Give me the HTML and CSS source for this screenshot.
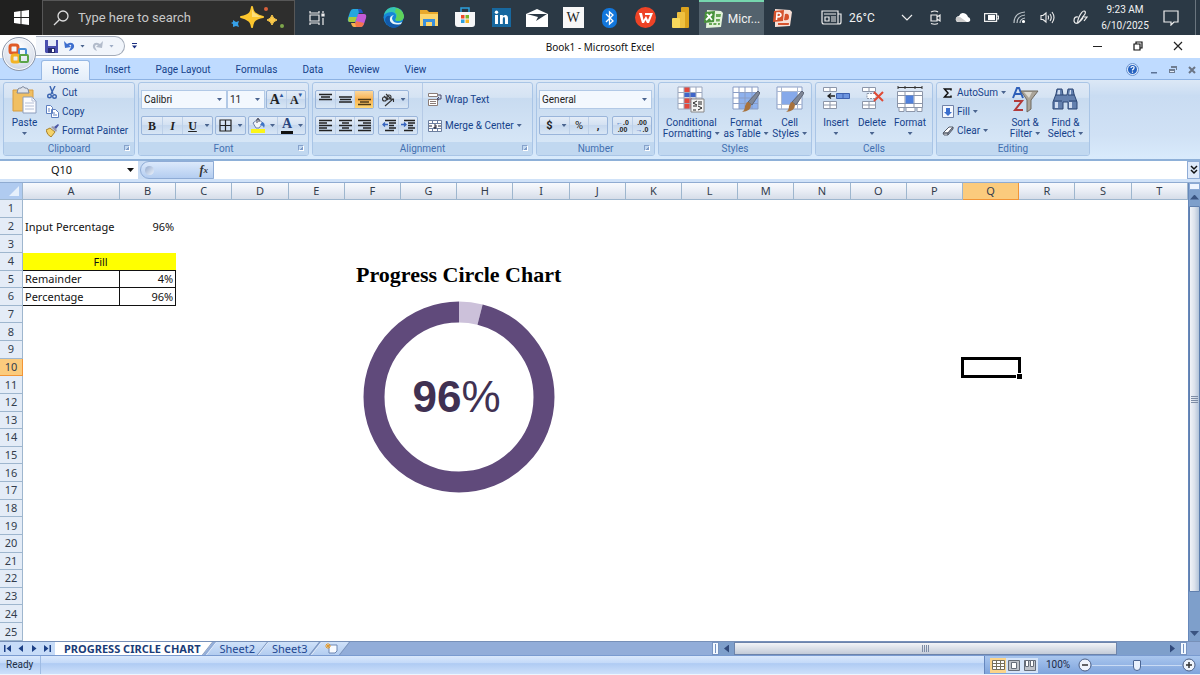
FILE: index.html
```html
<!DOCTYPE html>
<html lang="en">
<head>
<meta charset="utf-8">
<title>Book1 - Microsoft Excel</title>
<link rel="stylesheet" href="styles.css">
</head>
<body>
<header class="taskbar">
  <button class="start" aria-label="Start"><svg width="15" height="15" viewBox="0 0 15 15" fill="#fff"><path d="M0 2 6.500 1v6H0zM7.500 .9 15 0v7H7.500zM0 8h6.500v6L0 13zM7.500 8H15v7l-7.500-1z"/></svg></button>
  <div class="search">
    <svg width="16" height="16" viewBox="0 0 16 16" fill="none" stroke="#ddd" stroke-width="1.300"><circle cx="10" cy="6" r="5"/><path d="M6.300 9.700 1 15"/></svg>
    <input type="text" aria-label="Search" placeholder="Type here to search">
    <svg width="56" height="24" viewBox="0 0 56 24"><path d="M22 1q1 6 4 7 2 2 7 3-6 1-8 3-2 1-3 7-1-6-4-7-2-2-7-3 6-1 8-3 2-1 3-7z" fill="#fcc62e" stroke="#fcc62e" stroke-width="2" stroke-linejoin="round"/><path d="M22 2q1 5 4 6 2 2 6 3H22z" fill="#fee07a"/><path d="M42 9q1 4 5 5-4 1-5 5-1-4-5-5 4-1 5-5z" fill="#fbc94a" stroke="#fbc94a"/><path d="m3 14 3 2 3-1-1 3 1 3-3-1-3 1v-3l-2-1 2-1z" fill="#36a0e8"/><circle cx="36" cy="3" r="2" fill="#d9603a"/><circle cx="52" cy="20" r="2" fill="#7ea64b"/></svg>
  </div>
  <nav class="apps" aria-label="Taskbar">
    <button class="task-view" aria-label="Task view"><svg width="16" height="16" viewBox="0 0 16 16" fill="none" stroke="#eee" stroke-width="1.200"><path d="M1 1v2h9V1M1 15v-2h9v2M1 5h9v6H1zM14 1v2m0 5v7"/><path d="M13 4h2v2h-2z" fill="#eee"/></svg></button>
    <button aria-label="Copilot"><svg width="20" height="20" viewBox="0 0 20 20"><path d="M6 1h7l-4 13H3Q0 14 1 10L3 4Q4 1 6 1z" fill="#25a7de"/><path d="M2 9h8l-2 5H3Q0 14 2 9z" fill="#a8ca3c"/><path d="M11 1h2q2 0 3 4h-4z" fill="#2356c4"/><path d="M14 19H7l4-13h6q3 0 2 4l-2 6q-1 3-3 3z" fill="#c45bd7"/><path d="m9 13-2 6h7q2 0 3-4z" fill="#f4764d"/><path d="M9 19H7q-2 0-3-4h4z" fill="#f6b04b"/></svg></button>
    <button aria-label="Edge"><svg width="21" height="21" viewBox="0 0 21 21"><circle cx="10.500" cy="10.500" r="10" fill="#1685d8"/><path d="M1 8Q3 0 11 0q9 1 10 9 0 5-6 5-4 0-2-3Q14 6 9 5 4 5 1 8z" fill="#35c5b5"/><path d="M13 1q7 2 8 8 0 5-6 5-4 0-2-3 2-4-1-6z" fill="#5fd25a"/><path d="M7 9q-2 9 11 8-3 4-8 4-7-2-8-8 1-5 5-4z" fill="#1259a8"/><path d="M11 8q-4 3 0 7 4 2 8 0l-1 2q-8 2-11-3-1-5 4-6z" fill="#e9f6fb"/></svg></button>
    <button aria-label="File Explorer"><svg width="20" height="18" viewBox="0 0 20 18"><path d="M1 1h7l2 2h9v14H1z" fill="#e9a92c"/><path d="M1 5h18v12H1z" fill="#fcd56c"/><path d="M4 10h12v7h-3v-4H7v4H4z" fill="#3a8fdc"/></svg></button>
    <button aria-label="Store"><svg width="20" height="21" viewBox="0 0 20 21"><path d="M6 5V1h8v4" fill="none" stroke="#2da0dc" stroke-width="1.500"/><path d="M0 5h20v12q0 3-3 3H3q-3 0-3-3z" fill="#f5f6f7"/><path d="M6 8h3.500v3.500H6z" fill="#ee4b2b"/><path d="M10.500 8H14v3.500h-3.500z" fill="#78b829"/><path d="M6 12.500h3.500V16H6z" fill="#2b9fe0"/><path d="M10.500 12.500H14V16h-3.500z" fill="#f8b420"/></svg></button>
    <button aria-label="LinkedIn"><svg width="19" height="19" viewBox="0 0 19 19"><path d="M0 0h19v19H0z" fill="#17689f"/><path d="M3 7h3v9H3zM8 7h2.800v1.300Q12 7 13.500 7 16 7 16 10.500V16h-3v-5q0-2-1-2-1.200 0-1.200 2v5H8z" fill="#fff"/><circle cx="4.500" cy="4.200" r="1.700" fill="#fff"/></svg></button>
    <button aria-label="Mail"><svg width="22" height="18" viewBox="0 0 22 18"><path d="M0 5 11 0l11 5v13H0z" fill="#fff"/><path d="M1 5h20L10 12l2-4z" fill="#2b3945"/></svg></button>
    <button aria-label="Wikipedia"><span class="wiki">W</span></button>
    <button aria-label="Bluetooth"><svg width="15" height="20" viewBox="0 0 15 20"><rect width="15" height="20" rx="7" fill="#1277dc"/><path d="m4 6 7 7-3.500 3V4L11 7l-7 7" fill="none" stroke="#fff" stroke-width="1.300"/></svg></button>
    <button aria-label="WPS Office"><svg width="21" height="21" viewBox="0 0 21 21"><circle cx="10.500" cy="10.500" r="10.500" fill="#ee4326"/><path d="M4 6h3l1.500 7L11 9l2 4 2-5h-5V6h8l-4 10h-2l-1.500-3L9 16H7z" fill="#fff"/></svg></button>
    <button aria-label="Power BI"><svg width="18" height="22" viewBox="0 0 18 22"><rect x="9" width="8" height="21" rx="1" fill="#dba21c"/><rect x="5" y="5" width="8" height="16" rx="1" fill="#efc140"/><rect y="11" width="8" height="10" rx="1" fill="#f8d95c"/></svg></button>
    <button class="running"><svg width="21" height="20" viewBox="0 0 21 20"><path d="m4 1 14 1 2 2-2 14-15 1z" fill="#e3f3db"/><path d="M13 5h5l-.5 3H13zM6 14h3v2H6zm4.500 0h3l-.2 2h-3zm4.500 0h2l-.3 2H15zM13 10h4l-.3 2.500H13z" fill="#67a854"/><path d="m2 3 10-1-1 11-10 1z" fill="#49933d"/><path d="m4 5 5 6m0-6-6 6" stroke="#fff" stroke-width="1.800"/></svg><span>Micr...</span></button>
    <button aria-label="PowerPoint"><svg width="21" height="20" viewBox="0 0 21 20"><path d="m3 1 15 1 2 2-2 14-15 1z" fill="#f8dfd5"/><path d="M6 15h11l-.3 2H6z" fill="#d6532d"/><path d="M13 6q4-1 4 3t-5 3z" fill="#d6512c"/><path d="m2 3 10-1-1 11-10 1z" fill="#d6532d"/><path d="m4.500 12 .5-7h2.500q2 1 1.500 2.500Q8 9 5 9" fill="none" stroke="#fff" stroke-width="1.500"/></svg></button>
  </nav>
  <div class="tray">
    <button class="weather"><svg width="21" height="15" viewBox="0 0 21 15" fill="none" stroke="#eee" stroke-width="1.200"><path d="M1 1h16v13H3q-2 0-2-2zM17 4h3v8q0 2-2 2h-2M3 4h12M4 7h4v4H4zM10 7h5m-5 2h5m-5 2h5"/></svg><span>26°C</span></button>
    <button aria-label="Show hidden icons"><svg width="12" height="7" viewBox="0 0 12 7" fill="none" stroke="#eee" stroke-width="1.200"><path d="m1 1 5 5 5-5"/></svg></button>
    <button aria-label="Meet now"><svg width="13" height="15" viewBox="0 0 13 15" fill="none" stroke="#eee" stroke-width="1.200"><path d="M2 5h6v6H2zM8 7l3-2v6L8 9M2 2q4-2 7 0M2 13.500q4 1.500 7 0"/></svg></button>
    <button aria-label="OneDrive"><svg width="16" height="11" viewBox="0 0 16 11"><path d="M4 10Q0 10 1 6q1-2 3-2 2-5 7-2 2 2 2 3 3 1 2 4-1 1-2 1z" fill="#fff"/><path d="M1 6q1-2 4-1l7 5H4Q0 10 1 6z" fill="#ccc"/></svg></button>
    <button aria-label="Battery"><svg width="15" height="9" viewBox="0 0 15 9"><path d="M.6.600h12v7.800h-12zM13 3h1.500v3H13" fill="none" stroke="#eee" stroke-width="1.200"/><path d="M4 2h7v5H4z" fill="#fff"/></svg></button>
    <button aria-label="Wi-Fi"><svg width="13" height="13" viewBox="0 0 13 13" fill="none" stroke="#bbc3c8" stroke-width="1.200"><path d="M1 12Q1 2 12 1M4 12q0-7 8-8M7 12q0-4 5-5"/><circle cx="10.500" cy="10.500" r="1" stroke="#fff" fill="#fff"/></svg></button>
    <button aria-label="Volume"><svg width="15" height="13" viewBox="0 0 15 13" fill="none" stroke="#eee" stroke-width="1.100"><path d="M1 4.500h2L6 2v9L3 8.500H1zM8 4.500q1 2 0 4M10 3q2.500 3.500 0 7M12 1q4 5.500 0 11"/></svg></button>
    <button class="pen" aria-label="Windows Ink"><svg width="15" height="15" viewBox="0 0 15 15" fill="none" stroke="#eee" stroke-width="1.200"><path d="M5 7q-4-1-4 4 1 4 5 1l6-8q1-3-1-3-2 0-5 6-2 5-1 6 3-2 5-5M9 7h5l-3 4"/></svg></button>
    <div class="clock"><time>9:23 AM</time><time>6/10/2025</time></div>
    <button class="notify" aria-label="Notifications"><svg width="16" height="16" viewBox="0 0 16 16" fill="none" stroke="#eee" stroke-width="1.200"><path d="M1 1h14v11h-4l-3 3v-3H1z"/></svg></button>
    <span class="peek"></span>
  </div>
</header>

<div class="titlebar">
  <button class="office" aria-label="Office"><svg width="22" height="22" viewBox="0 0 22 22" fill="none" stroke-width="3"><rect x="2" y="2" width="8" height="8" rx="2" stroke="#e05a26"/><rect x="11" y="6" width="7" height="6" rx="1" stroke="#4a8ed6" stroke-width="2"/><rect x="4" y="12" width="7" height="7" rx="2" stroke="#f3b325"/><rect x="12" y="12" width="8" height="7" rx="1" stroke="#5ba446" stroke-width="2"/></svg></button>
  <div class="qat">
    <button aria-label="Save"><svg width="13" height="13" viewBox="0 0 13 13"><path d="M0 0h13v13H1l-1-1z" fill="#4a4fae"/><path d="M3 0h8v6H3z" fill="#e6ebf8"/><path d="M3 8h7v5H3z" fill="#252a6c"/><path d="M7 9h2v3H7z" fill="#fff"/></svg></button>
    <button aria-label="Undo"><svg width="12" height="12" viewBox="0 0 12 12"><path d="m1 1 1 7 6-1-2-2q3-1 2 2l-2 4q6-2 5-6Q9 1 4 4z" fill="#3f6fce"/></svg></button><i class="arrow"></i>
    <button aria-label="Redo"><svg width="12" height="12" viewBox="0 0 12 12"><path d="m11 1-1 7-6-1 2-2Q3 4 3 7l2 4Q0 9 1 5q2-4 7-1z" fill="#b3bccb"/></svg></button><i class="arrow faded"></i>
  </div>
  <button class="qat-more" aria-label="Customize toolbar"><svg width="5" height="6" viewBox="0 0 5 6" fill="#1b2f80"><path d="M0 0h5v1H0zM0 2.500h5L2.500 5.500z"/></svg></button>
  <h1>Book1 - Microsoft Excel</h1>
  <div class="window-controls">
    <button aria-label="Minimize"><svg width="10" height="10" viewBox="0 0 10 10" stroke="#222"><path d="M0 5.500h9"/></svg></button>
    <button aria-label="Restore"><svg width="10" height="10" viewBox="0 0 10 10" fill="none" stroke="#111" stroke-width="1.200"><path d="M1 3h6v6H1zM3 3V1h6v6H7"/></svg></button>
    <button aria-label="Close"><svg width="10" height="10" viewBox="0 0 10 10" stroke="#222" stroke-width="1.200"><path d="m1 1 8 8m0-8L1 9"/></svg></button>
  </div>
</div>

<nav class="tabs" aria-label="Ribbon">
  <button class="active">Home</button><button>Insert</button><button>Page Layout</button><button>Formulas</button><button>Data</button><button>Review</button><button>View</button>
  <div class="doc-controls">
    <button aria-label="Help"><svg width="13" height="13" viewBox="0 0 13 13"><circle cx="6.500" cy="6.500" r="6" fill="#dce9fb" stroke="#6c94cf"/><circle cx="6.500" cy="6.500" r="4.500" fill="#2562c0"/><path d="M5 5q0-1.500 1.700-1.500T8 5q0 .8-1.500 1.800v.7M6.500 8.500v1.200" fill="none" stroke="#fff" stroke-width="1.200"/></svg></button>
    <button aria-label="Minimize workbook"><svg width="8" height="8" viewBox="0 0 8 8"><path d="M1 6h6v1.500H1z" fill="#5c7396"/></svg></button>
    <button aria-label="Restore workbook"><svg width="8" height="8" viewBox="0 0 8 8"><path d="M2 0h6v4H7V2H2zM0 3h6v4H0z" fill="#707d91"/><path d="M1 5h4v1H1z" fill="#e5eefb"/></svg></button>
    <button aria-label="Close workbook"><svg width="8" height="8" viewBox="0 0 8 8" stroke="#6b7585" stroke-width="2"><path d="m1 1 6 6m0-6L1 7"/></svg></button>
  </div>
</nav>

<main class="ribbon">
  <section class="group clipboard">
    <div class="tools">
      <button class="big"><svg width="26" height="28" viewBox="0 0 26 28"><path d="M1 4h20v21H1z" fill="#f0bf62" stroke="#d79d40"/><path d="M6 3q1-1 3-1 2-3 4 0 2 0 3 1l1 4H5z" fill="#dfe3ea" stroke="#7c869a"/><path d="M11 11h9l4 4v12H11z" fill="#fbfcff" stroke="#8d9ebd"/><path d="M20 11v4h4M13 17h9m-9 3h9m-9 3h9" fill="none" stroke="#b5c0d6"/></svg><span>Paste</span><i class="arrow"></i></button>
      <div class="stack">
        <button class="small"><svg width="13" height="13" viewBox="0 0 13 13" fill="none" stroke="#3a64b0" stroke-width="1.400"><path d="m4 0 3 8m2-8L5 8"/><circle cx="3.500" cy="10" r="1.800"/><circle cx="8.500" cy="10.500" r="1.800"/></svg>Cut</button>
        <button class="small"><svg width="13" height="13" viewBox="0 0 13 13" fill="#fff" stroke="#5d7fc0"><path d="M.5.500h4l2 2v6h-6zM5.500 4.500h4l3 3v5h-7z"/><path d="M7 8h2m-2 2h4M2 4h2M2 6h2"/></svg>Copy</button>
        <button class="small"><svg width="13" height="13" viewBox="0 0 13 13"><path d="m0 6 4-2 5 4-4 5q-4-2-5-7z" fill="#f4d36a" stroke="#a8802a"/><path d="m5 3 2-1 4 4-1 2z" fill="#9a9aae"/><path d="m8 3 4-3 1 1-3 4z" fill="#4a57a5"/></svg>Format Painter</button>
      </div>
    </div>
    <h2>Clipboard</h2><button class="launch" aria-label="Clipboard options"></button>
  </section>

  <section class="group font">
    <div class="tools rows">
      <div class="row">
        <label class="combo family"><select aria-label="Font"><option>Calibri</option></select><i class="arrow"></i></label><label class="combo size"><select aria-label="Font size"><option>11</option></select><i class="arrow"></i></label>
        <div class="cluster apart"><button class="glyph grow" aria-label="Grow font">A<sup>▴</sup></button><button class="glyph shrink" aria-label="Shrink font">A<sup>▾</sup></button></div>
      </div>
      <div class="row spread">
        <div class="cluster"><button class="glyph"><b>B</b></button><button class="glyph"><i>I</i></button><button class="glyph"><u>U</u></button><button class="drop" aria-label="Underline styles"><i class="arrow"></i></button></div>
        <div class="cluster"><button aria-label="Borders"><svg width="13" height="13" viewBox="0 0 13 13" fill="none" stroke="#222" stroke-width="1.200"><path d="M1 1h11v11H1zM6.500 1v11M1 6.500h11"/></svg></button><button class="drop" aria-label="Border styles"><i class="arrow"></i></button></div>
        <div class="cluster"><button aria-label="Fill color"><svg width="15" height="15" viewBox="0 0 15 15"><path d="m2 5 5-4 5 4-4 5H5z" fill="#f3f6fb" stroke="#6b7fa8"/><path d="M6 5V1q1-1 2 0v3" fill="none" stroke="#445"/><path d="M11 4q4 1 2 6-1-3-4-3z" fill="#3e74c8"/><path d="M0 11h14v4H0z" fill="#fbf518"/></svg></button><button class="drop" aria-label="Fill colors"><i class="arrow"></i></button><button class="glyph ink" aria-label="Font color">A</button><button class="drop" aria-label="Font colors"><i class="arrow"></i></button></div>
      </div>
    </div>
    <h2>Font</h2><button class="launch" aria-label="Font options"></button>
  </section>

  <section class="group alignment">
    <div class="tools">
      <div class="rows">
        <div class="row wide">
          <div class="cluster"><button aria-label="Top align"><svg width="13" height="13" viewBox="0 0 13 13" stroke="#222" stroke-width="1.300"><path d="M0 1.500h13M2 4h9M0 6.500h13"/></svg></button><button aria-label="Middle align"><svg width="13" height="13" viewBox="0 0 13 13" stroke="#222" stroke-width="1.300"><path d="M0 4h13M1 6.500h11M0 9h13"/></svg></button><button class="on" aria-label="Bottom align"><svg width="13" height="13" viewBox="0 0 13 13" stroke="#4c3a18" stroke-width="1.300"><path d="M0 6.500h13M2 9h9M0 11.500h13"/></svg></button></div>
          <div class="cluster"><button aria-label="Orientation"><svg width="15" height="14" viewBox="0 0 15 14" fill="none" stroke="#333" stroke-width="1.100"><circle cx="3.500" cy="6" r="2"/><path d="m3 3 4 4M5 1l5 5"/><circle cx="8" cy="4" r="2"/><path d="m4 13 8-7m-3 0h3.500v3"/></svg></button><button class="drop" aria-label="Orientation options"><i class="arrow"></i></button></div>
        </div>
        <div class="row wide">
          <div class="cluster"><button aria-label="Align left"><svg width="13" height="13" viewBox="0 0 13 13" stroke="#222" stroke-width="1.300"><path d="M0 1.500h13M0 4h8M0 6.500h13M0 9h8m-8 2.500h13"/></svg></button><button aria-label="Center"><svg width="13" height="13" viewBox="0 0 13 13" stroke="#222" stroke-width="1.300"><path d="M0 1.500h13M3 4h7M0 6.500h13M3 9h7M0 11.500h13"/></svg></button><button aria-label="Align right"><svg width="13" height="13" viewBox="0 0 13 13" stroke="#222" stroke-width="1.300"><path d="M0 1.500h13M5 4h8M0 6.500h13M5 9h8M0 11.500h13"/></svg></button></div>
          <div class="cluster"><button aria-label="Decrease indent"><svg width="14" height="13" viewBox="0 0 14 13" stroke="#222" stroke-width="1.300"><path d="M3 1.500h11M7 4h7M7 6.500h5M7 9h7M3 11.500h9"/><path d="M6 5.500H1m2-2-2 2 2 2" fill="none" stroke="#3563bd"/></svg></button><button aria-label="Increase indent"><svg width="14" height="13" viewBox="0 0 14 13" stroke="#222" stroke-width="1.300"><path d="M3 1.500h11M7 4h7M7 6.500h5M7 9h7M3 11.500h9"/><path d="M0 5.500h5m-2-2 2 2-2 2" fill="none" stroke="#3563bd"/></svg></button></div>
        </div>
      </div>
      <div class="rows texts">
        <button class="small"><svg width="14" height="14" viewBox="0 0 14 14" fill="#fff" stroke="#8b7d78"><path d="M.5.500h9v3h-9zM.5 6.500h9v6h-9zM2 8.500h6m-6 2h6"/><path d="M10 2h3v4h-3m1-2-2 2 2 1" fill="none" stroke="#446"/></svg>Wrap Text</button>
        <button class="small"><svg width="14" height="14" viewBox="0 0 14 14" fill="#fff" stroke="#6d7f9f"><path d="M.5 1.500h13v11H.5zM4.500 1.500v3m5-3v3m-5 5v3m5-3v3M.5 4.500h13m-13 5h13"/><path d="M1 7h3m6 0h3M6 6h2v3H6V8h2" fill="none" stroke="#223"/></svg>Merge &amp; Center<i class="arrow"></i></button>
      </div>
    </div>
    <h2>Alignment</h2><button class="launch" aria-label="Alignment options"></button>
  </section>

  <section class="group number">
    <div class="tools rows">
      <label class="combo"><select aria-label="Number format"><option>General</option></select><i class="arrow"></i></label>
      <div class="row spread">
        <div class="cluster"><button class="sign">$</button><button class="drop" aria-label="Currencies"><i class="arrow"></i></button><button class="sign light">%</button><button class="sign">,</button></div>
        <div class="cluster"><button class="decimals" aria-label="Increase decimal"><span><em>←</em>.0</span><span>.00</span></button><button class="decimals" aria-label="Decrease decimal"><span>.00</span><span><em>→</em>.0</span></button></div>
      </div>
    </div>
    <h2>Number</h2><button class="launch" aria-label="Number options"></button>
  </section>

  <section class="group styles">
    <div class="tools">
      <button class="big"><svg width="28" height="28" viewBox="0 0 28 28"><path d="M1 1h24v22H1z" fill="#fff"/><path d="M7 1h6v5H7zM7 12h7v11H7z" fill="#e2483d"/><path d="M7 7h12v4H7z" fill="#3f66c9"/><path d="M7 12h8v5H7z" fill="#e2483d"/><path d="M1 1h24v22H1zM7 1v22m6-22v22m6-22v22M1 6.500h24M1 12h24M1 17.500h24" fill="none" stroke="#9aa6bd"/><path d="M14 13h13v13H14z" fill="#f5f5f5" stroke="#888"/><path d="m20 15-4 2 4 2m-4 1h4m1-4h4m-4 2h4m-4 2 4 2-4 2m-5 0h3" fill="none" stroke="#222"/></svg><span>Conditional</span><span>Formatting<i class="arrow"></i></span></button>
      <button class="big"><svg width="28" height="28" viewBox="0 0 28 28"><path d="M1 1h25v22H1z" fill="#fff"/><path d="M7 6h19v17H7z" fill="#8fb2ee"/><path d="M1 1h25v22H1zM7 1v22m6-22v22m7-22v22M1 6.500h25M1 12h25M1 17.500h25" fill="none" stroke="#8a9dc4"/><path d="m26 5 2 2-8 12-4-3z" fill="#7f8797" stroke="#5d6475"/><path d="M15 16q3 0 4 3 0 6-9 7 3-2 3-6z" fill="#a8723c"/></svg><span>Format</span><span>as Table<i class="arrow"></i></span></button>
      <button class="big"><svg width="28" height="28" viewBox="0 0 28 28"><path d="M1 1h25v22H1z" fill="#fff" stroke="#8a9dc4"/><path d="M1 5.500h25M1 18.500h25M5.500 1v22m16-22v22" stroke="#aab8d2"/><path d="M6 6h15v12H6z" fill="#86a9ea"/><path d="m26 5 2 2-8 12-4-3z" fill="#7f8797" stroke="#5d6475"/><path d="M15 16q3 0 4 3 0 6-9 7 3-2 3-6z" fill="#a8723c"/></svg><span>Cell</span><span>Styles<i class="arrow"></i></span></button>
    </div>
    <h2>Styles</h2>
  </section>

  <section class="group cells">
    <div class="tools">
      <button class="big"><svg width="28" height="28" viewBox="0 0 28 28" fill="#fff" stroke="#8c96a9"><path d="M1.500 1.500h13v4h-13zM8 1.500v4M1.500 15.500h13v7h-13zM8 15.500v7M1.500 19h13"/><path d="M14.500 7.500h13v5h-13zM21 7.500v5" fill="#6c94df" stroke="#3c60ae"/><path d="M13 10H6m3-2.500L6 10l3 2.500" fill="none" stroke="#222" stroke-width="1.300"/></svg><span>Insert</span><i class="arrow"></i></button>
      <button class="big"><svg width="28" height="28" viewBox="0 0 28 28" fill="#fff" stroke="#8c96a9"><path d="M4.500 1.500h13v4h-13zM11 1.500v4M4.500 15.500h13v7h-13zM11 15.500v7M4.500 19h13"/><path d="M9 7.500h9v5H9z" stroke-dasharray="2 1"/><path d="m16 6 9 9m0-9-9 9" stroke="#e04a35" stroke-width="2"/></svg><span>Delete</span><i class="arrow"></i></button>
      <button class="big"><svg width="28" height="28" viewBox="0 0 28 28" fill="#fff" stroke="#8c96a9"><path d="M1.500 5.500h25v16h-25zM3 21.500v4h5v-4M10 21.500v4h9v-4m2 0v4h5v-4M9 5v17M18 5v17M2 9.500h25M2 17.500h25"/><path d="M9.500 9.500h8v8h-8z" fill="#4f80dc" stroke="none"/><path d="M2 1.500h24M2 0v3M9 0v3M19 0v3m7-3v3" stroke="#333"/></svg><span>Format</span><i class="arrow"></i></button>
    </div>
    <h2>Cells</h2>
  </section>

  <section class="group editing">
    <div class="tools">
      <div class="stack">
        <button class="small"><svg width="12" height="12" viewBox="0 0 12 12" fill="none" stroke="#111" stroke-width="1.500"><path d="M9 3.500V2H2.500L6 6l-3.500 4H9V8.500"/></svg>AutoSum<i class="arrow"></i></button>
        <button class="small"><svg width="12" height="13" viewBox="0 0 12 13"><path d="M.5.500h11v12H.5z" fill="#f4f8ff" stroke="#7183a8"/><path d="M4 3h4v4h2l-4 4-4-4h2z" fill="#3b6fce"/></svg>Fill<i class="arrow"></i></button>
        <button class="small"><svg width="12" height="12" viewBox="0 0 12 12"><path d="m1 8 6-6h4L6 8zM1 8h5v2H2z" fill="#fff" stroke="#555c6b"/><path d="m6 10 5-6V2L6 8z" fill="#9aa3b3" stroke="#555c6b"/></svg>Clear<i class="arrow"></i></button>
      </div>
      <button class="big"><svg width="28" height="28" viewBox="0 0 28 28"><path d="m2 12 4-10h2l4 10M4 8h6" fill="none" stroke="#2f5fb8" stroke-width="2"/><path d="M3 15h8l-7 9h8" fill="none" stroke="#b23a3a" stroke-width="2"/><path d="M10 5h17l-7 9v9l-4 3V14z" fill="#aaa499" stroke="#6f6a61"/><path d="M13 6h8l-3 6z" fill="#dcd9d1"/></svg><span>Sort &amp;</span><span>Filter<i class="arrow"></i></span></button>
      <button class="big"><svg width="28" height="28" viewBox="0 0 28 28"><path d="M6 3h5l1 6h4l1-6h5l1 5 3 8v7h-9v-7h-5v7H2v-7l3-8z" fill="#6380ae" stroke="#2d4775"/><path d="M4 16h3v6H4zm14 0h3v6h-3zM7 4h2v5H6zm12 0h1v5h-2z" fill="#cfdcf0"/><path d="M5 9h7m5 0h6M3 15h8m7 0h8" stroke="#2d4775"/></svg><span>Find &amp;</span><span>Select<i class="arrow"></i></span></button>
    </div>
    <h2>Editing</h2>
  </section>
</main>

<div class="formula-bar">
  <div class="name-box"><input type="text" aria-label="Name box" value="Q10"><i class="arrow"></i></div>
  <div class="fx"><span class="knob"></span><button aria-label="Insert function"><i>f</i><sub>x</sub></button></div>
  <input class="formula" type="text" aria-label="Formula">
  <button class="expand" aria-label="Expand formula bar"><svg width="8" height="10" viewBox="0 0 8 10" fill="none" stroke="#111" stroke-width="1.500"><path d="m1 1 3 3 3-3M1 5l3 3 3-3"/></svg></button>
</div>

<div class="workbook">
  <div class="sheet">
    <table>
      <colgroup><col class="col-index"><col class="col-a"><col span="19"></colgroup>
      <thead><tr><th class="corner" aria-label="Select all"><svg width="10" height="10" viewBox="0 0 10 10"><path d="M10 0v10H0z" fill="#e6f0fc"/></svg></th><th>A</th><th>B</th><th>C</th><th>D</th><th>E</th><th>F</th><th>G</th><th>H</th><th>I</th><th>J</th><th>K</th><th>L</th><th>M</th><th>N</th><th>O</th><th>P</th><th class="current">Q</th><th>R</th><th>S</th><th>T</th></tr></thead>
      <tbody>
        <tr><th>1</th><td colspan="20"></td></tr>
        <tr><th>2</th><td>Input Percentage</td><td class="num">96%</td><td colspan="18"></td></tr>
        <tr><th>3</th><td colspan="20"></td></tr>
        <tr><th>4</th><td class="heading" colspan="2">Fill</td><td colspan="18"></td></tr>
        <tr><th>5</th><td class="boxed">Remainder</td><td class="boxed num">4%</td><td colspan="18"></td></tr>
        <tr><th>6</th><td class="boxed">Percentage</td><td class="boxed num">96%</td><td colspan="18"></td></tr>
        <tr><th>7</th><td colspan="20"></td></tr>
        <tr><th>8</th><td colspan="20"></td></tr>
        <tr><th>9</th><td colspan="20"></td></tr>
        <tr><th class="current">10</th><td colspan="16"></td><td class="selected"></td><td colspan="3"></td></tr>
        <tr><th>11</th><td colspan="20"></td></tr>
        <tr><th>12</th><td colspan="20"></td></tr>
        <tr><th>13</th><td colspan="20"></td></tr>
        <tr><th>14</th><td colspan="20"></td></tr>
        <tr><th>15</th><td colspan="20"></td></tr>
        <tr><th>16</th><td colspan="20"></td></tr>
        <tr><th>17</th><td colspan="20"></td></tr>
        <tr><th>18</th><td colspan="20"></td></tr>
        <tr><th>19</th><td colspan="20"></td></tr>
        <tr><th>20</th><td colspan="20"></td></tr>
        <tr><th>21</th><td colspan="20"></td></tr>
        <tr><th>22</th><td colspan="20"></td></tr>
        <tr><th>23</th><td colspan="20"></td></tr>
        <tr><th>24</th><td colspan="20"></td></tr>
        <tr><th>25</th><td colspan="20"></td></tr>
      </tbody>
    </table>
    <figure class="chart">
      <figcaption>Progress Circle Chart</figcaption>
      <div class="ring">
        <svg width="192" height="192" viewBox="0 0 192 192" fill="none" stroke-width="21"><g transform="rotate(-90 96 96)"><circle cx="96" cy="96" r="85" stroke="#ccc1da" pathLength="100" stroke-dasharray="4 96"/><circle cx="96" cy="96" r="85" stroke="#604a7b" pathLength="100" stroke-dasharray="96 4" stroke-dashoffset="-4"/></g></svg>
        <p><b>96</b>%</p>
      </div>
    </figure>
  </div>
  <div class="vscroll">
    <span class="split"></span>
    <button class="up" aria-label="Scroll up"></button>
    <span class="thumb"></span>
    <button class="down" aria-label="Scroll down"></button>
  </div>
</div>

<div class="sheet-bar">
  <div class="sheet-nav">
    <button aria-label="First sheet"><svg width="8" height="7" viewBox="0 0 8 7" fill="#1b3f86"><path d="M0 0h1.500v7H0zM7 0v7L2.500 3.500z"/></svg></button>
    <button aria-label="Previous sheet"><svg width="8" height="7" viewBox="0 0 8 7" fill="#1b3f86"><path d="M6 0v7L1.500 3.500z"/></svg></button>
    <button aria-label="Next sheet"><svg width="8" height="7" viewBox="0 0 8 7" fill="#1b3f86"><path d="M2 0v7l4.500-3.500z"/></svg></button>
    <button aria-label="Last sheet"><svg width="8" height="7" viewBox="0 0 8 7" fill="#1b3f86"><path d="M6.500 0H8v7H6.500zM1 0v7l4.500-3.500z"/></svg></button>
  </div>
  <button class="sheet-tab open"><span>PROGRESS CIRCLE CHART</span></button>
  <button class="sheet-tab"><span>Sheet2</span></button>
  <button class="sheet-tab"><span>Sheet3</span></button>
  <button class="sheet-tab new" aria-label="Insert worksheet"><svg width="13" height="11" viewBox="0 0 13 11"><path d="M4 2h8v6l-2 2H4z" fill="#f8fbff" stroke="#6c86b3"/><path d="M3 0v6M0 3h6M1 1l4 4m0-4L1 5" stroke="#e39a2c"/></svg></button>
  <div class="hscroll">
    <span class="grip"></span>
    <button class="left" aria-label="Scroll left"></button>
    <div class="track"><span class="thumb"></span></div>
    <button class="right" aria-label="Scroll right"></button>
    <span class="grip"></span>
  </div>
</div>

<footer class="status">
  <span class="ready">Ready</span>
  <div class="view-tools">
    <div class="views">
      <button class="on" aria-label="Normal view"><svg width="13" height="11" viewBox="0 0 13 11" fill="#fff" stroke="#77705c"><path d="M.5.500h12v9H.5zM4.500.500v9m4-9v9M.5 3.500h12m-12 3h12"/></svg></button>
      <button aria-label="Page layout view"><svg width="12" height="11" viewBox="0 0 12 11" stroke="#666d78"><path d="M.5.500h11v10H.5z" fill="#bfc3c9"/><path d="M3.500 2.500h5v6h-5z" fill="#fff"/></svg></button>
      <button aria-label="Page break view"><svg width="12" height="11" viewBox="0 0 12 11" stroke="#666d78"><path d="M.5.500h11v10H.5z" fill="#bfc3c9"/><path d="M1.500.500h3v6h-3zM6.500.500h3v6h-3z" fill="#fff"/></svg></button>
    </div>
    <button class="percent">100%</button>
    <button class="zoom-step" aria-label="Zoom out"><svg width="14" height="14" viewBox="0 0 14 14"><circle cx="7" cy="7" r="6" fill="#eef4fd" stroke="#4b5f85"/><path d="M4 7h6" stroke="#333" stroke-width="1.500"/></svg></button>
    <input class="zoom" type="range" min="0" max="100" value="50" aria-label="Zoom">
    <button class="zoom-step" aria-label="Zoom in"><svg width="14" height="14" viewBox="0 0 14 14"><circle cx="7" cy="7" r="6" fill="#eef4fd" stroke="#4b5f85"/><path d="M4 7h6M7 4v6" stroke="#333" stroke-width="1.500"/></svg></button>
  </div>
</footer>
</body>
</html>
```

FILE: styles.css
```css
* { box-sizing: border-box; }
body { margin: 0; height: 100vh; display: flex; flex-direction: column; overflow: hidden; background: #fff; font: 10px/12px Roboto, "Noto Sans", sans-serif; color: #15428b; }
button { display: flex; align-items: center; justify-content: center; margin: 0; padding: 0; border: 0; background: none; font: inherit; color: inherit; white-space: nowrap; }
input, select { min-width: 0; margin: 0; padding: 0; border: 0; outline: 0; font: inherit; border-radius: 0; }
svg { display: block; flex: none; }
h1, h2, p, figure { margin: 0; font-weight: 400; }
.arrow { flex: none; width: 5px; height: 3px; background: #4a648f; clip-path: polygon(0 0, 100% 0, 50% 100%); }

/* Windows taskbar */
.taskbar { flex: none; display: flex; height: 35px; background: #2b3945; color: #f2f2f2; }
.start { width: 42px; background: #20201f; }
.search { display: flex; align-items: center; width: 253px; padding: 0 8px 0 10px; background: #2e2e2d; border: 1px solid #575757; border-bottom: 0; }
.search input { flex: 1; padding-left: 9px; background: none; font-size: 13px; line-height: 18px; color: #ddd; }
.search input::placeholder { color: #c8c8c8; opacity: 1; }
.apps { display: flex; }
.apps button { width: 36px; }
.apps .task-view { width: 44px; }
.apps .running { width: 65px; gap: 4px; background: #53626d; border-top: 2px solid #76d6ae; font-size: 12px; }
.wiki { width: 21px; height: 21px; background: #f7f7f7; color: #222; font: 14px/21px "Liberation Serif", serif; }
.tray { display: flex; margin-left: auto; }
.tray button { width: 28px; }
.tray .weather { width: 72px; justify-content: flex-start; gap: 7px; font-size: 12px; }
.tray .pen { width: 38px; }
.tray .notify { width: 40px; }
.clock { display: flex; flex-direction: column; justify-content: center; align-items: center; width: 52px; font-size: 10px; line-height: 16px; }
.peek { width: 5px; margin-left: 4px; border-left: 1px solid #6a757e; }

/* Title bar */
.titlebar { position: relative; flex: none; display: flex; height: 23px; padding-left: 36px; color: #111; }
.office { position: absolute; z-index: 2; top: 2px; left: 2px; width: 34px; height: 34px; border: 1px solid #8d97aa; border-radius: 50%; background: radial-gradient(circle at 50% 30%, #fff, #dde3ee 60%, #b4bfd3); box-shadow: inset 0 0 0 1px #f7f9fc; }
.qat { display: flex; align-items: center; gap: 5px; width: 89px; height: 20px; margin-top: 1px; padding-left: 9px; border: 1px solid #a3abb9; border-left: 0; border-radius: 0 10px 10px 0; background: #f1f5fb; }
.qat button + .arrow { margin-right: 2px; }
.faded { opacity: .5; }
.qat-more { width: 18px; height: 22px; }
.titlebar h1 { position: absolute; inset: 0; text-align: center; font: 10px/24px "Noto Sans", sans-serif; pointer-events: none; }
.window-controls { display: flex; margin-left: auto; padding-right: 2px; }
.window-controls button { width: 40px; height: 22px; }

/* Ribbon tabs */
.tabs { flex: none; display: flex; gap: 5px; height: 22px; padding: 2px 4px 0 41px; background: #bfdbff; border-bottom: 1px solid #8db2e3; }
.tabs > button { padding: 0 10px; }
.tabs > .active { height: 20px; background: linear-gradient(#f5f9fe, #e4eefa); border: 1px solid #97b8e4; border-bottom: 0; border-radius: 3px 3px 0 0; }
.doc-controls { display: flex; gap: 11px; margin-left: auto; }

/* Ribbon */
.ribbon { flex: none; display: flex; gap: 3px; padding: 2px 3px 3px; background: linear-gradient(#dce8f6, #c9dcf2 20%, #d0e1f5 70%, #d9ebfc); border-bottom: 2px solid #8eb0d8; }
.group { position: relative; display: flex; flex-direction: column; border: 1px solid #a9c5e6; border-radius: 3px; background: linear-gradient(#dfe9f6, #d5e3f3 20%, #c8dbf0 21%, #dae9f8); }
.tools { display: flex; height: 59px; padding: 0 2px; }
.group h2 { height: 13px; text-align: center; font-size: 10px; line-height: 13px; color: #4370b0; background: #c1d8f0; border-radius: 0 0 2px 2px; }
.launch { position: absolute; right: 4px; bottom: 4px; width: 6px; height: 6px; border: 1px solid #86a2cb; border-right-color: #fff; border-bottom-color: #fff; background: linear-gradient(135deg, transparent 60%, #7f9cc8 60%); }
.clipboard { width: 132px; }
.font { width: 171px; }
.alignment { width: 221px; }
.number { width: 119px; }
.styles { width: 154px; }
.cells { width: 118px; }
.editing { width: 154px; }
.stack { display: grid; grid-template-rows: repeat(3, 19px); align-content: start; justify-items: start; }
.small { gap: 3px; }
.big { flex: 1 0 auto; flex-direction: column; justify-content: flex-start; padding-top: 3px; line-height: 11px; }
.big svg { margin-bottom: 3px; }
.big > .arrow { margin-top: 4px; }
.big span { display: flex; align-items: center; gap: 3px; }
.clipboard .big { flex: 0 0 37px; }
.clipboard .stack { padding-left: 3px; }
.editing .stack { padding-left: 3px; }
.rows { display: flex; flex-direction: column; gap: 7px; padding-top: 7px; }
.row { display: flex; }
.spread { justify-content: space-between; }
.wide { gap: 4px; }
.cluster { display: flex; height: 19px; border: 1px solid #9ab5da; border-radius: 2px; background: linear-gradient(#e4edf8, #d2e0f1 50%, #c6d8ee 50%, #d8e6f5); }
.cluster button { width: 19px; }
.cluster button + button { border-left: 1px solid #bdd0e8; }
.cluster .drop { width: 10px; border-left: 0; }
.cluster .on { background: linear-gradient(#fbd79d, #f9b14d 50%, #fdd777); }
.font .spread .cluster:first-child button:not(.drop) { width: 20px; }
.font .spread .cluster:last-child .drop { width: 9px; }
.combo { display: flex; align-items: center; height: 19px; padding-right: 4px; border: 1px solid #b2c9e6; background: #f3f8fe; color: #222; }
.combo select { flex: 1; padding-left: 2px; appearance: none; background: none; color: inherit; }
.family { width: 86px; }
.size { width: 38px; }
.apart { margin-left: auto; }
.glyph { font: bold 12px/14px "Liberation Serif", serif; color: #222; }
.grow { font-size: 14px; }
.glyph sup { font: 7px/8px "DejaVu Sans", sans-serif; color: #31569c; align-self: flex-start; }
.cluster .ink { position: relative; font-size: 14px; padding-bottom: 3px; color: #29457d; }
.ink::after { content: ""; position: absolute; left: 3px; right: 3px; bottom: 0; height: 3px; background: #111; }
.texts { margin-left: 4px; padding-left: 5px; border-left: 1px solid #b5cae6; }
.texts .small { height: 19px; justify-content: flex-start; }
.sign { font-weight: 700; font-size: 11px; color: #222; }
.light { font-weight: 400; }
.decimals { flex-direction: column; font: bold 7px/7px "Liberation Sans", sans-serif; color: #222; }
.decimals em { font-style: normal; color: #3563bd; }

/* Formula bar */
.formula-bar { flex: none; display: flex; height: 21px; border-bottom: 3px solid #d0e2f8; background: #c9dcf4; color: #111; }
.name-box { display: flex; align-items: center; width: 138px; padding-right: 4px; background: #fff; }
.name-box input { flex: 1; width: 0; padding-right: 4px; text-align: center; font: 11px/16px "Noto Sans", sans-serif; color: #111; }
.name-box .arrow { width: 7px; height: 4px; background: #111; }
.fx { display: flex; align-items: center; justify-content: space-between; width: 74px; margin-left: 2px; padding: 0 5px 0 4px; border: 1px solid #8facd6; border-radius: 9px 0 0 9px; background: linear-gradient(#dce9fb, #b4cdf0); }
.knob { width: 9px; height: 9px; border-radius: 50%; background: linear-gradient(135deg, #92a9cd, #eef4fc); }
.fx button { font: bold 12px/14px "Liberation Serif", serif; color: #333; }
.fx sub { font-size: 9px; font-style: italic; }
.formula { flex: 1; background: #fff; color: #111; }
.expand { width: 13px; border: 1px solid #8facd6; background: #dfeafa; }

/* Worksheet */
.workbook { flex: 1; display: flex; min-height: 0; border-top: 1px solid #8fabd1; }
.sheet { position: relative; flex: 1; min-width: 0; }
table { width: 100%; height: 100%; table-layout: fixed; border-collapse: separate; border-spacing: 0; font: 11px/14px "Noto Sans", sans-serif; color: #111; }
.col-index { width: 23px; }
.col-a { width: 97px; }
th, td { padding: 0; overflow: visible; white-space: nowrap; }
th { font-weight: 400; color: #333d4d; background: #e4ecf7; border-right: 1px solid #9eb6ce; border-bottom: 1px solid #9eb6ce; }
thead th { height: 17px; background: linear-gradient(#f8fafd, #e9edf5 50%, #d6dde9); }
.corner svg { margin-left: auto; margin-right: 3px; }
thead .corner { background: #b0cbf0; }
th.current, thead .current { background: #fbcb7d; border-color: #f29536; }
td { padding-top: 1px; padding-left: 2px; line-height: 12px; }
.num { padding-right: 2px; text-align: right; }
.heading { background: #ff0; text-align: center; border-bottom: 1px solid #111; }
.boxed { border-right: 1px solid #111; border-bottom: 1px solid #111; }
.selected { position: relative; }
.selected::before { content: ""; position: absolute; inset: -2px; border: 3px solid #000; }
.selected::after { content: ""; position: absolute; right: -3px; bottom: -3px; width: 5px; height: 5px; background: #000; border: solid #fff; border-width: 1px 0 0 1px; }
.chart { position: absolute; top: 79px; left: 356px; display: flex; flex-direction: column; align-items: center; gap: 13px; }
.chart figcaption { font: bold 22px/26px "Liberation Serif", serif; color: #000; white-space: nowrap; }
.ring { display: grid; place-items: center; }
.ring > * { grid-area: 1 / 1; }
.ring p { padding-right: 4px; font: 44px/48px "Liberation Sans", sans-serif; color: #403152; }

.vscroll { display: flex; flex-direction: column; width: 12px; background: #7e9fcb; border-left: 1px solid #6688bb; }
.split { height: 7px; background: #eef5ff; border: 1px solid #88a8d4; }
.vscroll .thumb { flex: 1; display: grid; place-items: center; margin-top: 2px; border: 1px solid #5f7fae; background: linear-gradient(90deg, #f1f3f8, #dce2ec 50%, #b2c3d9); border-radius: 1px; }
.vscroll .thumb::after, .hscroll .thumb::after { content: ""; width: 7px; height: 7px; background: repeating-linear-gradient(#7d8ca5 0 1px, transparent 1px 2px); }
.up { height: 14px; }
.up::after, .down::after { content: ""; width: 9px; height: 5px; background: #3a5481; clip-path: polygon(50% 0, 100% 100%, 0 100%); }
.down { height: 49px; align-items: flex-end; padding-bottom: 5px; }
.down::after { clip-path: polygon(0 0, 100% 0, 50% 100%); }

/* Sheet tabs and horizontal scroll */
.sheet-bar { flex: none; display: flex; height: 15px; background: #92add9; border-top: 1px solid #7790b8; border-bottom: 1px solid #7a9bd0; }
.sheet-nav { display: flex; width: 55px; padding: 0 1px; background: #c7dcf8; }
.sheet-nav button { flex: 1; }
.sheet-tab { position: relative; padding: 0 8px 0 9px; font: 11px/13px "Noto Sans", sans-serif; color: #1e4690; isolation: isolate; }
.sheet-tab::before { content: ""; position: absolute; z-index: -1; inset: 0 1px 0 0; border-right: 1px solid #7a93bb; border-left: 1px solid #eff6ff; background: linear-gradient(#cfe1f9, #b3cdf0); transform: skewX(-38deg); }
.open { padding: 0 10px 0 9px; font: bold 11px/13px "Noto Sans", sans-serif; color: #1a3c78; background: linear-gradient(90deg, #fff 92%, transparent 92%); }
.open::before { background: #fff; border-left: 0; left: 10px; right: 3px; }
.hscroll { display: flex; align-items: stretch; width: 475px; margin-left: auto; margin-right: 13px; background: #7e9fcb; }
.grip { width: 7px; background: #7793c0 content-box; border: 2px solid #f4f9ff; border-width: 2px 3px; outline: 1px solid #7793c0; outline-offset: -1px; }
.left, .right { width: 15px; }
.left::after, .right::after { content: ""; width: 5px; height: 8px; background: #30497a; clip-path: polygon(100% 0, 100% 100%, 0 50%); }
.right::after { clip-path: polygon(0 0, 100% 50%, 0 100%); }
.track { flex: 1; display: flex; padding-right: 48px; }
.track .thumb { flex: 1; display: grid; place-items: center; border: 1px solid #6d84ab; background: linear-gradient(#f2f4f7, #c3cbd8); }
.hscroll .thumb::after { background: repeating-linear-gradient(90deg, #7d8ca5 0 1px, transparent 1px 2px); }

/* Status bar */
.status { flex: none; display: flex; align-items: center; justify-content: space-between; height: 19px; background: linear-gradient(#d9e8fc, #c3d9f8 40%, #afcbf3 42%, #cde0fa); border-bottom: 1px solid #eef5fd; }
.ready { padding: 3px 7px 3px 6px; color: #222f45; border-right: 1px solid #9ebbe3; }
.view-tools { display: flex; align-items: center; align-self: stretch; width: 216px; padding: 0 4px 0 5px; background: linear-gradient(#a9c6ee, #7fa4dc); border-left: 1px solid #6687bd; }
.views { display: flex; background: #d5e4f8; }
.views button { width: 16px; height: 15px; }
.views .on { background: #fbd48a; }
.percent { margin: 0 8px; color: #1d2b49; }
.zoom { flex: 1; height: 13px; appearance: none; background: linear-gradient(#c9dbf4, #c9dbf4) center / 100% 1px no-repeat; }
.zoom::-webkit-slider-thumb { appearance: none; width: 8px; height: 11px; background: #e9f1fc; border: 1px solid #4b6592; border-radius: 1px 1px 4px 4px; }
```
